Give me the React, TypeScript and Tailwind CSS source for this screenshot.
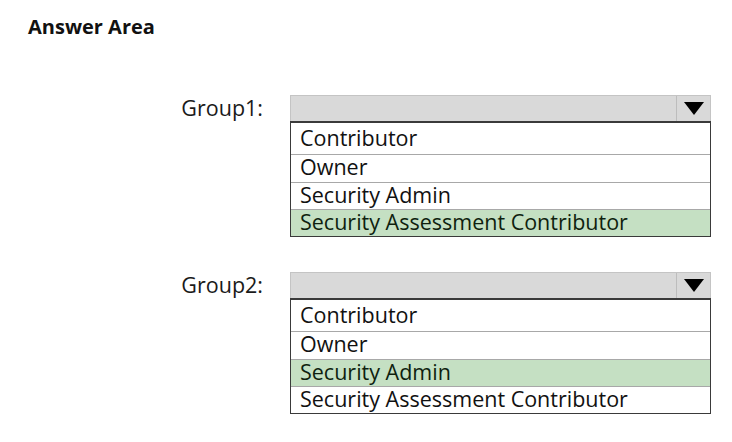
import React from "react";

type Group = { label: string; options: string[]; selected: number };

const groups: Group[] = [
  {
    label: "Group1:",
    options: ["Contributor", "Owner", "Security Admin", "Security Assessment Contributor"],
    selected: 3,
  },
  {
    label: "Group2:",
    options: ["Contributor", "Owner", "Security Admin", "Security Assessment Contributor"],
    selected: 2,
  },
];

const rowHeights = ["h-[31px]", "h-[28px]", "h-[27px]", "h-[27px]"];

function Dropdown({ group }: { group: Group }) {
  return (
    <div className="flex items-start">
      <div className="w-[93px] h-[26px] flex items-center justify-end text-[21.5px] leading-none text-[#1a1a1a]">
        {group.label}
      </div>
      <div className="ml-[27px] w-[421px] flex flex-col">
        <div className="h-[26px] flex bg-[#d9d9d9] border border-[#c4c4c4] border-b-0">
          <div className="flex-1" />
          <div className="w-[34px] border-l border-[#bdbdbd] flex items-center justify-center">
            <svg width="20" height="14" viewBox="0 0 20 14">
              <polygon points="0,0 20,0 10,13" fill="#000" />
            </svg>
          </div>
        </div>
        <div className="border border-[#3a3a3a] border-t-2 flex flex-col">
          {group.options.map((opt, i) => (
            <div
              key={opt}
              className={`${rowHeights[i]} ${i > 0 ? "border-t border-[#a8a8a8] pb-[3px]" : "pb-[1px]"} ${
                i === group.selected ? "bg-[#c5e0c3] text-[#0f1f0f]" : "bg-white text-[#111]"
              } flex items-center pl-[9px] text-[21.5px] leading-none`}
            >
              {opt}
            </div>
          ))}
        </div>
      </div>
    </div>
  );
}

export default function App() {
  return (
    <div
      className="w-[732px] h-[442px] bg-white relative overflow-hidden"
      style={{ fontFamily: '"Open Sans", "Noto Sans", sans-serif' }}
    >
      <div className="pt-[15px] pl-[28px] text-[20px] font-bold text-[#111] leading-[24px]">Answer Area</div>
      <div className="pl-[170px] pt-[56px] flex flex-col gap-[35px]">
        {groups.map((g) => (
          <Dropdown key={g.label} group={g} />
        ))}
      </div>
    </div>
  );
}
